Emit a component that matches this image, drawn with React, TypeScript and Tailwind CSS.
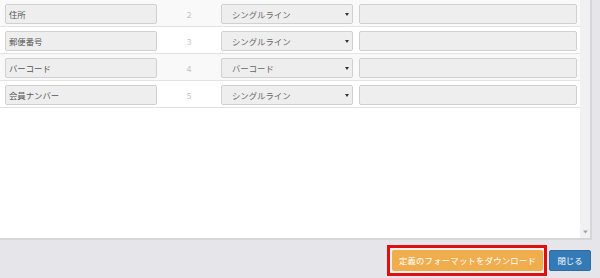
import React from "react";

const rows = [
  { name: "住所", no: "2", type: "シングルライン" },
  { name: "郵便番号", no: "3", type: "シングルライン" },
  { name: "バーコード", no: "4", type: "バーコード" },
  { name: "会員ナンバー", no: "5", type: "シングルライン" },
];

export default function App() {
  return (
    <div className="w-[600px] h-[278px] bg-[#e6e6ea] flex flex-col font-['Noto_Sans_CJK_JP','Noto_Sans',sans-serif] text-[8.4px] overflow-hidden">
      <div className="flex h-[240px] shrink-0">
        <div className="w-[592px] flex border-r-2 border-b-2 border-[#d6d6da]">
          <div className="w-[580px] bg-white flex flex-col">
            {rows.map((r, i) => (
              <div
                key={r.no}
                className={`flex items-start h-[27px] border-b border-[#e2e2e2] pl-[5px] ${i % 2 === 0 ? "bg-[#f9f9f9]" : "bg-white"}`}
              >
                <div className="mt-[4px] w-[152px] h-[20px] bg-[#eeeeee] border border-[#d0d0d0] rounded-[2px] pl-[3px] leading-[18px] text-[#555]">
                  {r.name}
                </div>
                <div className="mt-[4px] w-[64px] h-[20px] leading-[20px] text-center text-[#c4c4c4]">
                  {r.no}
                </div>
                <div className="mt-[4px] w-[132px] h-[20px] bg-[#eeeeee] border border-[#d0d0d0] rounded-[2px] pl-[10px] pr-[3px] leading-[18px] text-[#666] flex justify-between items-center">
                  <span>{r.type}</span>
                  <svg width="4" height="3" viewBox="0 0 4 3">
                    <path d="M0 0 H4 L2 3 Z" fill="#333" />
                  </svg>
                </div>
                <div className="mt-[4px] ml-[6px] w-[218px] h-[20px] bg-[#eeeeee] border border-[#d0d0d0] rounded-[2px]" />
              </div>
            ))}
          </div>
          <div className="w-[10px] bg-[#f1f1f1] flex flex-col justify-end items-center pb-[4px]">
            <svg width="5" height="4" viewBox="0 0 5 4">
              <path d="M0 0.5 H5 L2.5 3.5 Z" fill="#a3a3a3" />
            </svg>
          </div>
        </div>
      </div>
      <div className="flex justify-end items-start pt-[5px] pr-[9px]">
        <div className="border-[3px] border-[#e01010] bg-[#f0f0f0] pl-[2px] pr-[1px] py-[2px]">
          <button className="w-[151px] h-[21px] bg-[#f0ad4e] rounded-[2px] text-white text-[8.4px] leading-[21px] tracking-[0.2px]">
            定義のフォーマットをダウンロード
          </button>
        </div>
        <button className="ml-[2px] mt-[5px] w-[42px] h-[21px] bg-[#337ab7] border border-[#2e6da4] rounded-[2px] text-white text-[8.4px] leading-[19px]">
          閉じる
        </button>
      </div>
    </div>
  );
}
